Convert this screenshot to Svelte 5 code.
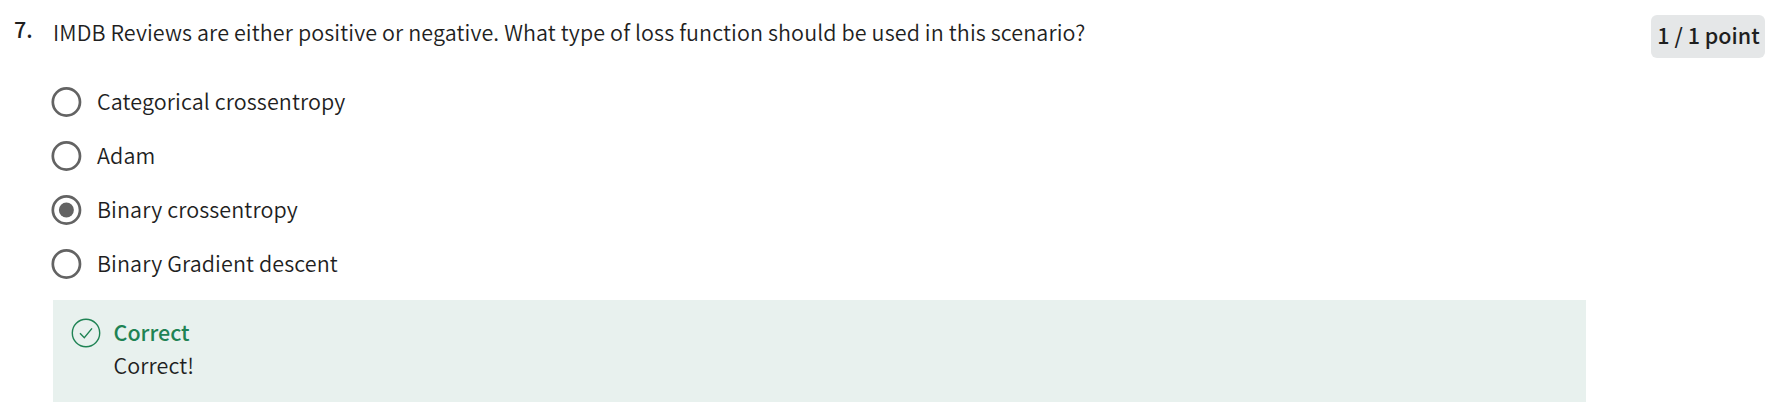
<script>
  const options = [
    { label: 'Categorical crossentropy', selected: false },
    { label: 'Adam', selected: false },
    { label: 'Binary crossentropy', selected: true },
    { label: 'Binary Gradient descent', selected: false }
  ];
</script>

<main class="question">
  <span class="number">7.</span>
  <section class="body">
    <p class="prompt">IMDB Reviews are either positive or negative. What type of loss function should be used in this scenario?</p>
    <ul class="options">
      {#each options as option}
        <li class="option">
          <svg class="radio" viewBox="0 0 30 30" aria-hidden="true">
            <circle cx="15.4" cy="15" r="13.6" fill="none" stroke="#636363" stroke-width="2.7" />
            {#if option.selected}
              <circle cx="15.4" cy="15" r="7.5" fill="#636363" />
            {/if}
          </svg>
          <span class="label">{option.label}</span>
        </li>
      {/each}
    </ul>
    <div class="feedback">
      <svg class="check" viewBox="0 0 30 30" fill="none" stroke="#1f8354" stroke-width="1.4" aria-hidden="true">
        <circle cx="15" cy="15" r="13.7" />
        <path d="M9 15.2 L13.3 19.7 L21 10.4" />
      </svg>
      <div class="message">
        <p class="verdict">Correct</p>
        <p class="note">Correct!</p>
      </div>
    </div>
  </section>
  <span class="points">1 / 1 point</span>
</main>

<style>
  :global(body) {
    background: #fff;
  }
  .question {
    box-sizing: border-box;
    display: flex;
    align-items: flex-start;
    width: 1776px;
    height: 419px;
    padding: 15px 11px 0 14px;
    color: #1f1f1f;
    font-family: 'Noto Sans CJK SC', 'Noto Sans', sans-serif;
    font-size: 21.5px;
    font-weight: 350;
    line-height: 32px;
    white-space: nowrap;
  }
  p,
  ul {
    margin: 0;
    padding: 0;
  }
  .number {
    width: 39px;
    margin-top: -2px;
    font-weight: 500;
  }
  .body {
    width: 1533px;
    padding-top: 1px;
  }
  .prompt,
  .label,
  .note {
    letter-spacing: 0.105px;
  }
  .options {
    padding: 27px 0 9px;
    list-style: none;
  }
  .option {
    display: flex;
    align-items: center;
    height: 54px;
    margin-left: -2px;
    gap: 16px;
  }
  .label {
    padding-bottom: 3px;
  }
  .radio {
    width: 30px;
    height: 30px;
    overflow: visible;
  }
  .feedback {
    box-sizing: border-box;
    display: flex;
    gap: 12.5px;
    height: 102px;
    padding: 16px 18px;
    background: #e8f1ee;
  }
  .check {
    width: 30px;
    height: 30px;
    margin-top: 2px;
  }
  .message {
    margin-top: -1px;
  }
  .verdict {
    color: #1f8354;
    font-weight: 500;
    line-height: 33px;
  }
  .note {
    line-height: 33px;
  }
  .points {
    box-sizing: border-box;
    width: 114px;
    height: 43px;
    margin-left: auto;
    padding: 4px 0 0 1px;
    border-radius: 6px;
    background: #e5e7e8;
    font-weight: 500;
    text-align: center;
  }
</style>
